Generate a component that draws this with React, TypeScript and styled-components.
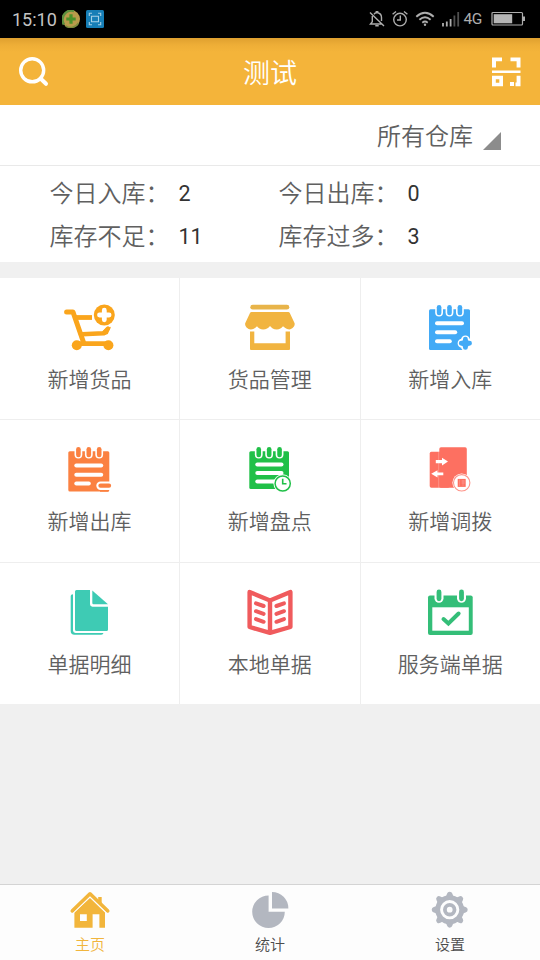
import React from 'react';
import styled, { createGlobalStyle } from 'styled-components';

const GlobalStyle = createGlobalStyle`
  * { box-sizing: border-box; }
  body {
    margin: 0;
    background: #f0f0f0;
    font-family: Roboto, "Noto Sans CJK SC", sans-serif;
    font-weight: 350;
  }
  svg { display: block; flex: none; }
`;

const Screen = styled.div`
  width: 540px;
  height: 960px;
  display: flex;
  flex-direction: column;
  background: #f0f0f0;
  overflow: hidden;
`;

const StatusBar = styled.div`
  height: 38px;
  flex: none;
  background: #000;
  display: flex;
  align-items: center;
  justify-content: space-between;
  padding: 0 14px 0 12px;
`;

const StatusGroup = styled.div<{ $gap: number }>`
  display: flex;
  align-items: center;
  gap: ${(p) => p.$gap}px;
`;

const Clock = styled.span`
  font: 400 18px/38px Roboto, sans-serif;
  color: #c4c4c4;
  padding-top: 1px;
  margin-right: -1px;
`;

const Network = styled.span`
  font: 400 15.5px/38px Roboto, sans-serif;
  letter-spacing: -0.4px;
  color: #adadad;
  margin: 0 2px 0 -3px;
`;

const Header = styled.header`
  height: 67px;
  flex: none;
  background: linear-gradient(#dfa02f 0, #eeae37 7px, #f4b43a 14px);
  display: grid;
  grid-template-columns: 60px 1fr 60px;
  align-items: center;
  padding: 0 19px;
`;

const Title = styled.h1`
  margin: 0;
  padding-top: 4px;
  font-size: 27px;
  line-height: 40px;
  font-weight: 350;
  text-align: center;
  color: #fff;
`;

const HeaderButton = styled.div<{ $end?: boolean }>`
  display: flex;
  justify-content: ${(p) => (p.$end ? 'flex-end' : 'flex-start')};
`;

const WarehouseSelect = styled.div`
  height: 61px;
  flex: none;
  background: #fff;
  border-bottom: 1px solid #e9e9e9;
  display: flex;
  align-items: center;
  justify-content: flex-end;
  gap: 10px;
  padding: 3px 39px 0 0;
  font-size: 24px;
  line-height: 36px;
  color: #606060;
`;

const Corner = styled.svg`
  margin-top: 9px;
`;

const Stats = styled.section`
  height: 96px;
  flex: none;
  background: #fff;
  display: grid;
  grid-template-columns: 229px 1fr;
  grid-template-rows: 43px 43px;
  padding: 6px 0 0 49.5px;
`;

const Stat = styled.div`
  display: flex;
  align-items: center;
`;

const StatLabel = styled.span`
  width: 120px;
  font-size: 24px;
  line-height: 36px;
  white-space: nowrap;
  color: #606060;
`;

const StatValue = styled.span`
  margin-left: 9px;
  font: 400 21.5px/30px Roboto, sans-serif;
  color: #333;
`;

const Grid = styled.main`
  margin-top: 16px;
  flex: none;
  height: 426.5px;
  display: grid;
  grid-template-columns: 180px 180.5px 1fr;
  grid-template-rows: 142.4px 142.2px 141.9px;
`;

const Tile = styled.div`
  background: #fff;
  border-right: 1.5px solid #eee;
  border-bottom: 1.5px solid #eee;
  display: flex;
  flex-direction: column;
  align-items: center;
  padding-top: 24px;
  &:nth-child(3n) { border-right: 0; }
  &:nth-child(n + 7) { border-bottom: 0; }
`;

const TileLabel = styled.span`
  margin-top: 12px;
  font-size: 21px;
  line-height: 32px;
  color: #606060;
`;

const TabBar = styled.nav`
  margin-top: auto;
  height: 76px;
  flex: none;
  background: #fdfdfd;
  border-top: 1px solid #d4d4d4;
  display: grid;
  grid-template-columns: repeat(3, 1fr);
`;

const Tab = styled.div<{ $active?: boolean }>`
  display: flex;
  flex-direction: column;
  align-items: center;
  padding-top: 5px;
  font-size: 15px;
  line-height: 22px;
  gap: 4px;
  color: ${(p) => (p.$active ? '#f1b53d' : '#4c4c4c')};
`;

const TileSvg = ({ children }: { children: React.ReactNode }) => (
  <svg width="56" height="50" viewBox="0 0 56 50" fill="none">{children}</svg>
);

type PadProps = {
  color: string;
  left?: number;
  right?: number;
  bottom?: number;
  lines: [number, number][];
  children?: React.ReactNode;
};

const Notepad = ({ color, left = 7, right = 48, bottom = 48, lines, children }: PadProps) => {
  const mid = (left + right) / 2;
  return (
    <TileSvg>
      <rect x={left} y="7.3" width={right - left} height={bottom - 7.3} rx="1.5" fill={color} />
      {[mid - 10.4, mid, mid + 10.4].map((x) => (
        <g key={x} strokeLinecap="round">
          <path d={`M${x} 5.4V10.6`} stroke="#fff" strokeWidth="7.8" />
          <path d={`M${x} 5.2V11`} stroke={color} strokeWidth="4.6" />
        </g>
      ))}
      {lines.map(([y, end]) => (
        <path key={y} d={`M${left + 8} ${y}H${end}`} stroke="#fff" strokeWidth="4" strokeLinecap="round" />
      ))}
      {children}
    </TileSvg>
  );
};

const CartIcon = () => (
  <TileSvg>
    <g stroke="#faa51c" strokeLinecap="round" strokeLinejoin="round">
      <path d="M4.6 10H11L21.4 40" strokeWidth="5" />
      <path d="M14 15.5H30" strokeWidth="4.8" strokeLinecap="butt" />
      <path d="M20 32.3L41.5 31.2L46 26.5" strokeWidth="4.4" />
      <path d="M15 41.6H46" strokeWidth="4.8" />
    </g>
    <path d="M40 30L43 27L49 24.8L45.8 32L42 33.4Z" fill="#faa51c" />
    <circle cx="14.8" cy="43.2" r="5" fill="#faa51c" />
    <circle cx="46.4" cy="43.2" r="5" fill="#faa51c" />
    <circle cx="42.3" cy="13" r="10.5" fill="#faa51c" />
    <path d="M42.3 8.2V17.8M37.5 13H47.1" stroke="#fff" strokeWidth="4.8" strokeLinecap="round" />
  </TileSvg>
);

const StoreIcon = () => (
  <TileSvg>
    <rect x="8.3" y="2.8" width="39" height="4.8" rx="2.4" fill="#e8b44a" />
    <path d="M9.5 10H46.3Q47.3 10 47.8 11L52.6 21.3C53.2 24 50.5 27.4 47.3 27.4C44 27.4 42 25 41 24.3C39.7 26 37.5 27.6 34.8 27.6C31.5 27.6 29.5 25.8 28 24C26.3 26 24.2 27.6 21.2 27.6C18.3 27.6 16.3 26 15 24.3C13.7 25.6 11.8 27.4 8.7 27.4C5.5 27.4 2.6 24 3.2 21.3L8 11Q8.5 10 9.5 10Z" fill="#f1b440" />
    <path d="M8 29.5H12.3V41.2H43.6V29.5H48V47Q48 48 47 48H9Q8 48 8 47Z" fill="#f1b440" />
  </TileSvg>
);

const StockInIcon = () => (
  <Notepad color="#42aaf6" lines={[[21.3, 40], [30.3, 33.2], [39.3, 27.8]]}>
    <path d="M43.4 38V44.6M40.1 41.3H46.7" stroke="#fff" strokeWidth="9" strokeLinecap="round" />
    <path d="M46 44H49V49H46Z" fill="#fff" />
    <path d="M43.4 37.2V45.4M39.3 41.3H47.5" stroke="#42aaf6" strokeWidth="4.9" strokeLinecap="round" />
    <circle cx="43.4" cy="41.3" r="3.9" fill="#42aaf6" />
  </Notepad>
);

const StockOutIcon = () => (
  <Notepad color="#fb8141" left={6.3} right={47.3} bottom={47.5} lines={[[21.5, 39.2], [30.7, 39.2], [39.5, 26.8]]}>
    <path d="M38.5 41.7H54" stroke="#fff" strokeWidth="8.4" strokeLinecap="round" />
    <path d="M38.5 41.7H47" stroke="#fb8141" strokeWidth="4.3" strokeLinecap="round" />
    <path d="M38 47.1H46.5" stroke="#fb8141" strokeWidth="1.3" />
  </Notepad>
);

const CountIcon = () => (
  <Notepad color="#20c048" left={7.3} right={47} bottom={45} lines={[[20.5, 39.5], [29, 39.5], [37.5, 33]]}>
    <circle cx="40.7" cy="39.5" r="9.3" fill="#fff" />
    <circle cx="40.7" cy="39.5" r="7.6" fill="#fff" stroke="#20c048" strokeWidth="1.5" />
    <path d="M40.7 34.8V39.8H44.5" stroke="#20c048" strokeWidth="1.6" />
  </Notepad>
);

const TransferIcon = () => (
  <TileSvg>
    <rect x="7.7" y="7.8" width="20" height="36" rx="1.7" fill="#fd7061" />
    <path d="M16.9 8V43.8" stroke="#fff" strokeOpacity=".4" strokeWidth=".8" />
    <rect x="17.3" y="3.2" width="27.5" height="40.6" rx="1.7" fill="#fd7061" />
    <path d="M13.8 16H20V13.7L26 17.6L20 21.5V19.2H13.8ZM21.3 28.4H15.5V26.2L9.2 29.8L15.5 33.4V31.2H21.3Z" fill="#fff" />
    <circle cx="39.7" cy="38.8" r="9.3" fill="#fff" />
    <circle cx="39.7" cy="38.8" r="8.2" stroke="#fd7061" strokeOpacity=".75" strokeWidth="1.1" />
    <rect x="35.7" y="34.9" width="8" height="8" fill="#fd7061" />
    <path d="M37.5 35.5V42M39.5 37H43M39.5 39H43M41 36V42" stroke="#fff" strokeOpacity=".3" strokeWidth=".6" />
  </TileSvg>
);

const DocumentIcon = () => (
  <TileSvg>
    <path d="M14.5 3H28V17.3Q28 19.7 30.5 19.7H46V42.5Q46 44 44.5 44H14.5Q13 44 13 42.5V4.5Q13 3 14.5 3Z" fill="#3ecbb4" />
    <path d="M30.3 3.5L46 17.3H31.5Q30.3 17.3 30.3 16Z" fill="#3ecbb4" />
    <path d="M11 7.3V43.5Q11 45.9 13.5 45.9H41.3V46.5Q40.5 47.8 39 47.8H12.5Q8.7 47.8 8.7 44V9Q8.7 7.3 11 7.3Z" fill="#3ecbb4" />
  </TileSvg>
);

const BookIcon = () => (
  <TileSvg>
    <path d="M7.6 5L28 13.5L48.4 5V40L28 45.9L7.6 40ZM28 13V45" stroke="#f05b5d" strokeWidth="4.4" strokeLinejoin="round" />
    <g stroke="#f05b5d" strokeWidth="4" strokeLinecap="round">
      <path d="M14 16.3L21.6 19M14 24.2L21.6 26.9M14 32.1L21.6 34.8" />
      <path d="M42 16.3L34.4 19M42 24.2L34.4 26.9M42 32.1L34.4 34.8" />
    </g>
  </TileSvg>
);

const CalendarIcon = () => (
  <TileSvg>
    <rect x="6" y="8.4" width="44.7" height="39.6" rx="2" fill="#34be78" />
    <rect x="10.3" y="20.3" width="36.5" height="23.4" fill="#fff" />
    {[17, 39.5].map((x) => (
      <g key={x} strokeLinecap="round">
        <path d={`M${x} 5V11.2`} stroke="#fff" strokeWidth="9" />
        <path d={`M${x} 5V11.8`} stroke="#34be78" strokeWidth="4.8" />
      </g>
    ))}
    <path d="M21.5 32L26.4 36.5L36.6 26.5" stroke="#34be78" strokeWidth="4" strokeLinecap="round" />
  </TileSvg>
);

const HomeIcon = () => (
  <svg width="40" height="40" viewBox="0 0 40 40" fill="none">
    <path d="M28.2 7H31.7V15.5L28.2 12Z" fill="#f2b53b" />
    <path d="M2.4 20.9L20 3.8L37.6 20.9" stroke="#f2b53b" strokeWidth="3.6" strokeLinecap="round" strokeLinejoin="round" />
    <path fillRule="evenodd" d="M20 8L35 22.4V37.8H29.4V24.3H22.6V37.8H4.4V22.4ZM10 24.3V31H16.8V24.3Z" fill="#f2b53b" />
    <path d="M2.8 23.6L20 7L37.2 23.6" stroke="#fdfdfd" strokeWidth="1" />
  </svg>
);

const PieIcon = () => (
  <svg width="40" height="40" viewBox="0 0 40 40" fill="#b3b7c0">
    <path d="M18.6 5.5A16.3 16.3 0 1 0 34.8 21.7H18.6Z" />
    <path d="M22 2A16.4 16.4 0 0 1 38.4 18.4H22Z" />
  </svg>
);

const GearIcon = () => (
  <svg width="40" height="40" viewBox="0 0 40 40" fill="none">
    <circle cx="19.7" cy="19.7" r="12" stroke="#b3b7c0" strokeWidth="4.8" />
    {[0, 45, 90, 135, 180, 225, 270, 315].map((a) => (
      <path key={a} d="M14.2 8Q16.8 6.2 17 3.8Q17.6 1.7 19.7 1.7Q21.8 1.7 22.4 3.8Q22.6 6.2 25.2 8Z" fill="#b3b7c0" transform={`rotate(${a} 19.7 19.7)`} />
    ))}
    <circle cx="19.7" cy="19.7" r="4.8" stroke="#b3b7c0" strokeWidth="3.8" />
  </svg>
);

const SearchIcon = () => (
  <svg width="30" height="30" viewBox="0 0 30 30" fill="none" stroke="#fff" strokeWidth="3.4">
    <circle cx="13.2" cy="13.3" r="11.5" />
    <path d="M21.5 21.5L27 26.8" strokeWidth="4" strokeLinecap="round" />
  </svg>
);

const ScanIcon = () => (
  <svg width="29" height="30" viewBox="0 0 29 30" fill="#fff">
    <path d="M0 .5H10V4.3H4V10.5H0ZM18.5 .5H28.5V10.5H24.6V4.3H18.5ZM0 13.4H28.5V16H0Z" />
    <path fillRule="evenodd" d="M0 18.7H11V29.3H0ZM3.8 22.3V25.8H7.3V22.3Z" />
    <path d="M24.6 18.7H28.5V29.3H23.5V25.5H24.6ZM18 25H22V29H18Z" />
  </svg>
);

const AppBadge = () => (
  <svg width="18" height="18" viewBox="0 0 18 18" fill="none">
    <circle cx="9" cy="9" r="9" fill="#b89b4b" />
    <path d="M2 14.5A9 9 0 0 1 12 1" stroke="#5d913f" strokeWidth="2.5" />
    <path d="M3.5 15.8A9 9 0 0 0 16.5 13" stroke="#7b8c3d" strokeWidth="1.5" />
    <path d="M9 4.3V13.7M4.3 9H13.7" stroke="#49922a" strokeWidth="3.2" />
  </svg>
);

const CaptureBadge = () => (
  <svg width="18" height="18" viewBox="0 0 18 18" fill="none">
    <rect width="18" height="18" rx="1.5" fill="#167eb6" />
    <path d="M3.3 6V3.3H6M12 3.3H14.7V6M14.7 12V14.7H12M6 14.7H3.3V12M5.5 6.2H12.5V11.8H5.5Z" stroke="#a7d0e5" strokeWidth="1.1" />
  </svg>
);

const MutedBell = () => (
  <svg width="16" height="18" viewBox="0 0 16 18" fill="none" stroke="#adadad" strokeWidth="1.4">
    <path d="M3.3 6V11.8L1.5 14H13M5 4.2Q6 3 7.3 2.8V1.8H8.7V2.8Q12.5 3.7 12.5 7.5V11M6.3 15.8H9.7M1 2.5L15 16" />
  </svg>
);

const AlarmIcon = () => (
  <svg width="16" height="18" viewBox="0 0 16 18" fill="none" stroke="#adadad" strokeWidth="1.4">
    <circle cx="8" cy="9.6" r="6.3" />
    <path d="M8.3 5.5V10H5M.6 4.3L4 1.5M15.4 4.3L12 1.5" />
  </svg>
);

const WifiIcon = () => (
  <svg width="20" height="18" viewBox="0 0 20 18" fill="none" stroke="#adadad" strokeWidth="1.9">
    <path d="M1.3 6.7Q10 -1 18.7 6.7M4.4 9.8Q10 4.8 15.6 9.8M7.3 12.7Q10 10.5 12.7 12.7" />
    <circle cx="10" cy="14.7" r="1.2" fill="#adadad" stroke="none" />
  </svg>
);

const SignalIcon = () => (
  <svg width="18" height="18" viewBox="0 0 18 18" strokeWidth="1.8">
    <path d="M1 13V16.5M4.8 11.5V16.5M8.6 9V16.5" stroke="#adadad" />
    <path d="M12.4 5.5V16.5M16.2 2V16.5" stroke="#505050" />
  </svg>
);

const BatteryIcon = () => (
  <svg width="35" height="16" viewBox="0 0 35 16" fill="none">
    <rect x="1" y="1.5" width="30.5" height="12.5" rx="1" stroke="#adadad" strokeWidth="1.2" />
    <rect x="2.7" y="3.2" width="18.5" height="9.1" fill="#b5b5b5" />
    <path d="M32 5.5H34V10H32Z" fill="#adadad" />
  </svg>
);

const stats = [
  ['今日入库：', '2'],
  ['今日出库：', '0'],
  ['库存不足：', '11'],
  ['库存过多：', '3'],
];

const tiles: [string, React.ComponentType][] = [
  ['新增货品', CartIcon],
  ['货品管理', StoreIcon],
  ['新增入库', StockInIcon],
  ['新增出库', StockOutIcon],
  ['新增盘点', CountIcon],
  ['新增调拨', TransferIcon],
  ['单据明细', DocumentIcon],
  ['本地单据', BookIcon],
  ['服务端单据', CalendarIcon],
];

const tabs: [string, React.ComponentType][] = [
  ['主页', HomeIcon],
  ['统计', PieIcon],
  ['设置', GearIcon],
];

export default function App() {
  return (
    <>
      <GlobalStyle />
      <Screen>
        <StatusBar>
          <StatusGroup $gap={6}>
            <Clock>15:10</Clock>
            <AppBadge />
            <CaptureBadge />
          </StatusGroup>
          <StatusGroup $gap={7}>
            <MutedBell />
            <AlarmIcon />
            <WifiIcon />
            <SignalIcon />
            <Network>4G</Network>
            <BatteryIcon />
          </StatusGroup>
        </StatusBar>
        <Header>
          <HeaderButton><SearchIcon /></HeaderButton>
          <Title>测试</Title>
          <HeaderButton $end><ScanIcon /></HeaderButton>
        </Header>
        <WarehouseSelect>
          所有仓库
          <Corner width="18" height="18" viewBox="0 0 18 18"><path d="M18 0V18H0Z" fill="#8c8c8c" /></Corner>
        </WarehouseSelect>
        <Stats>
          {stats.map(([label, value]) => (
            <Stat key={label}>
              <StatLabel>{label}</StatLabel>
              <StatValue>{value}</StatValue>
            </Stat>
          ))}
        </Stats>
        <Grid>
          {tiles.map(([label, Icon]) => (
            <Tile key={label}><Icon /><TileLabel>{label}</TileLabel></Tile>
          ))}
        </Grid>
        <TabBar>
          {tabs.map(([label, Icon], i) => (
            <Tab key={label} $active={i === 0}><Icon /><span>{label}</span></Tab>
          ))}
        </TabBar>
      </Screen>
    </>
  );
}
